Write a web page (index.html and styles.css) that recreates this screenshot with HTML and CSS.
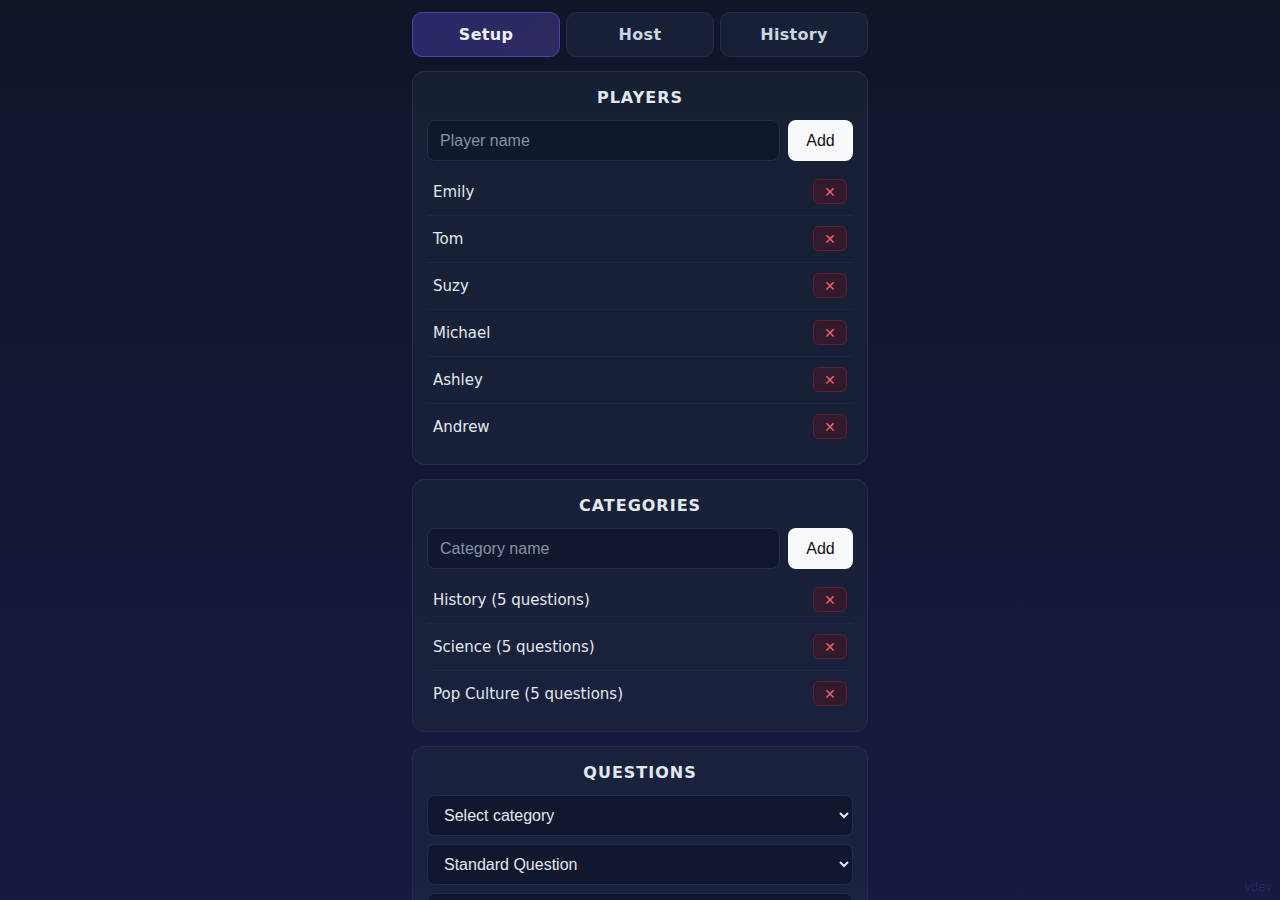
FILE: index.html
```html
<!DOCTYPE html>
<html lang="en">
<head>
<meta charset="utf-8">
<title>Quiz Setup</title>
<link rel="stylesheet" href="styles.css">
</head>
<body>
<div class="app">
  <nav class="tabs">
    <button class="tab active">Setup</button>
    <button class="tab">Host</button>
    <button class="tab">History</button>
  </nav>

  <section class="card">
    <h2 class="card-title">PLAYERS</h2>
    <div class="add-row">
      <input class="text-input" type="text" placeholder="Player name">
      <button class="add-btn">Add</button>
    </div>
    <ul class="list">
      <li class="item"><span>Emily</span><button class="del">✕</button></li>
      <li class="item"><span>Tom</span><button class="del">✕</button></li>
      <li class="item"><span>Suzy</span><button class="del">✕</button></li>
      <li class="item"><span>Michael</span><button class="del">✕</button></li>
      <li class="item"><span>Ashley</span><button class="del">✕</button></li>
      <li class="item"><span>Andrew</span><button class="del">✕</button></li>
    </ul>
  </section>

  <section class="card">
    <h2 class="card-title">CATEGORIES</h2>
    <div class="add-row">
      <input class="text-input" type="text" placeholder="Category name">
      <button class="add-btn">Add</button>
    </div>
    <ul class="list">
      <li class="item"><span>History (5 questions)</span><button class="del">✕</button></li>
      <li class="item"><span>Science (5 questions)</span><button class="del">✕</button></li>
      <li class="item"><span>Pop Culture (5 questions)</span><button class="del">✕</button></li>
    </ul>
  </section>

  <section class="card">
    <h2 class="card-title">QUESTIONS</h2>
    <div class="stack">
      <select class="select"><option>Select category</option></select>
      <select class="select"><option>Standard Question</option></select>
      <textarea class="text-area" placeholder="Question"></textarea>
      <input class="text-input" type="text" placeholder="Answer">
    </div>
  </section>
</div>
<div class="watermark">vdev</div>
</body>
</html>
```

FILE: styles.css
```css
* { box-sizing: border-box; }
html, body { margin: 0; padding: 0; }
body {
  min-height: 100vh;
  background: linear-gradient(180deg, #0f1628 0%, #181a42 100%) fixed;
  color: #e2e8f0;
  font-family: "DejaVu Sans", sans-serif;
  font-size: 15px;
}
.app {
  width: 456px;
  margin: 0 auto;
  padding-top: 12px;
  display: flex;
  flex-direction: column;
  gap: 14px;
}
.tabs {
  display: flex;
  gap: 6px;
}
.tab {
  flex: 1;
  height: 45px;
  border-radius: 10px;
  border: 1px solid #232c4e;
  background: #172034;
  color: #cbd5e1;
  font-family: "DejaVu Sans", sans-serif;
  font-weight: bold;
  font-size: 16px;
  letter-spacing: 0.3px;
  cursor: pointer;
}
.tab.active {
  background: linear-gradient(135deg, #28296a 0%, #2e2a5e 100%);
  border-color: #4548a8;
  color: #eef2f7;
}
.card {
  background: rgba(30, 41, 59, 0.5);
  border: 1px solid #232a55;
  border-radius: 12px;
  padding: 14px;
}
.card-title {
  margin: 0 0 11px;
  padding-top: 1px;
  text-align: center;
  font-size: 16px;
  line-height: 22px;
  font-weight: bold;
  letter-spacing: 1px;
  color: #e2e8f0;
}
.add-row {
  display: flex;
  gap: 8px;
}
.text-input, .select, .text-area {
  height: 41px;
  border-radius: 8px;
  border: 1px solid #232a55;
  background: rgba(15, 22, 42, 0.8);
  color: #e2e8f0;
  font-family: "Liberation Sans", Arial, sans-serif;
  font-size: 16px;
  padding: 0 12px;
  outline: none;
}
.text-input { flex: 1; min-width: 0; }
.text-area {
  height: 80px;
  padding: 12px;
  resize: vertical;
}
.text-input::placeholder, .text-area::placeholder { color: #8591a6; }
.add-btn {
  width: 65px;
  height: 41px;
  border: none;
  border-radius: 8px;
  background: #f8f9fa;
  color: #111;
  font-family: "Liberation Sans", Arial, sans-serif;
  font-size: 16px;
  cursor: pointer;
}
.list {
  list-style: none;
  margin: 8px 0 0;
  padding: 0;
}
.item {
  height: 47px;
  display: flex;
  align-items: center;
  justify-content: space-between;
  padding: 0 6px;
  border-bottom: 1px solid #1f2748;
}
.item:last-child { border-bottom: none; height: 46px; }
.del {
  width: 34px;
  height: 25px;
  margin-bottom: 1px;
  border-radius: 6px;
  border: 1px solid #5c2032;
  background: #33192c;
  color: #f2606e;
  font-size: 14px;
  line-height: 1;
  padding: 0;
  cursor: pointer;
}
.stack {
  display: flex;
  flex-direction: column;
  gap: 8px;
}
.select {
  width: 100%;
  color-scheme: dark;
  padding-left: 12px;
}
.watermark {
  position: fixed;
  right: 8px;
  bottom: 6px;
  font-family: "Liberation Sans", Arial, sans-serif;
  font-size: 13px;
  color: #22285a;
}
```
